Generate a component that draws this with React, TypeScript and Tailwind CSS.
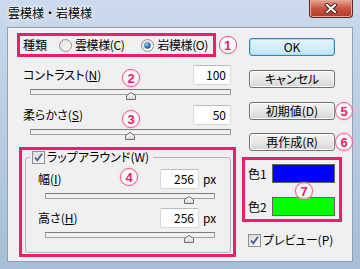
import type { ReactNode } from "react";

const jp = "font-['Noto_Sans_CJK_JP','Noto_Sans',sans-serif] [font-feature-settings:'palt'] whitespace-nowrap";

function Badge({ n, className }: { n: string; className: string }) {
  return (
    <span
      className={`absolute flex h-[18px] w-[18px] items-center justify-center rounded-full border-[1.5px] border-[#f2568a] bg-white/70 font-['Liberation_Sans',sans-serif] text-[13px] leading-none font-bold text-[#ec1b6c] shadow-[0_0_2px_#f9a8c6] ${className}`}
    >
      {n}
    </span>
  );
}

function Radio({ checked }: { checked?: boolean }) {
  return (
    <svg width="13" height="13" viewBox="0 0 13 13" className="block shrink-0">
      <defs>
        <linearGradient id="rg" x1="0" y1="0" x2="1" y2="1">
          <stop offset="0" stopColor="#dcdcdc" />
          <stop offset="1" stopColor="#ffffff" />
        </linearGradient>
        <radialGradient id="rd" cx="0.4" cy="0.35" r="0.7">
          <stop offset="0" stopColor="#9cd2f8" />
          <stop offset="0.6" stopColor="#2a6fc0" />
          <stop offset="1" stopColor="#1c4f95" />
        </radialGradient>
      </defs>
      <circle cx="6.5" cy="6.5" r="6" fill="url(#rg)" stroke="#8e8f8f" />
      {checked && <circle cx="6.5" cy="6.5" r="3.2" fill="url(#rd)" />}
    </svg>
  );
}

function Check() {
  return (
    <svg width="13" height="13" viewBox="0 0 13 13" className="block shrink-0">
      <defs>
        <linearGradient id="cg" x1="0" y1="0" x2="1" y2="1">
          <stop offset="0" stopColor="#d9d9d9" />
          <stop offset="1" stopColor="#fafafa" />
        </linearGradient>
      </defs>
      <rect x="0.5" y="0.5" width="12" height="12" fill="url(#cg)" stroke="#8e8f8f" />
      <path d="M3 6.5 L5.3 9.3 L10 2.8" fill="none" stroke="#4a5c98" strokeWidth="1.8" />
    </svg>
  );
}

function Thumb({ className }: { className: string }) {
  return (
    <svg width="10" height="8" viewBox="0 0 10 8" className={`absolute ${className}`}>
      <defs>
        <linearGradient id="tg" x1="0" y1="0" x2="0" y2="1">
          <stop offset="0" stopColor="#ffffff" />
          <stop offset="1" stopColor="#d6d6d6" />
        </linearGradient>
      </defs>
      <path d="M0.5 7.5 V3.5 L5 0.5 L9.5 3.5 V7.5 Z" fill="url(#tg)" stroke="#6f6f6f" />
    </svg>
  );
}

function Track({ className, thumb }: { className: string; thumb: string }) {
  return (
    <div className={`relative h-[6px] border border-[#a0a0a0] border-t-[#7c7c7c] bg-[#f2f2f2] ${className}`}>
      <Thumb className={thumb} />
    </div>
  );
}

function Field({ value, className }: { value: string; className: string }) {
  return (
    <div
      className={`flex h-[20px] items-center justify-end rounded-[2px] border border-[#d6d9de] border-t-[#b9bcc2] bg-white pr-[4px] text-[12px] ${className}`}
    >
      {value}
    </div>
  );
}

function Btn({ children, primary }: { children: ReactNode; primary?: boolean }) {
  return (
    <div
      className={
        primary
          ? "flex h-[18px] w-[86px] items-center justify-center rounded-[3px] border border-[#3c7fb1] bg-linear-to-b from-[#eaf6fd] to-[#bfe4f9] text-[12px] shadow-[inset_0_0_0_1px_#9ee3fc]"
          : "flex h-[18px] w-[86px] items-center justify-center rounded-[3px] border border-[#707070] bg-linear-to-b from-[#f3f3f3] via-[#e8e8e8] to-[#d4d4d4] text-[12px] shadow-[inset_0_0_0_1px_#fcfcfc]"
      }
    >
      {children}
    </div>
  );
}

export default function App() {
  return (
    <div className={`h-[269px] w-[360px] overflow-hidden bg-linear-to-b from-[#cbdaec] to-[#a7bdd6] ${jp} text-black`}>
      <div className="flex h-[27px] items-start justify-between pr-[7px]">
        <div className="pt-[5px] pl-[8px] text-[12px] leading-[16px] [font-feature-settings:normal] [text-shadow:0_0_6px_#fff,0_0_3px_#fff]">
          雲模様・岩模様
        </div>
        <div className="flex h-[18px] w-[44px] items-center justify-center rounded-b-[4px] border border-t-0 border-[#5c2a26] bg-linear-to-b from-[#e5a494] via-[#c75442] to-[#b23a28] shadow-[inset_0_0_0_1px_#e9a595]">
          <svg width="14" height="11" viewBox="0 0 14 11">
            <path d="M3 2 L11 9 M11 2 L3 9" stroke="#3a1f1c" strokeWidth="4" strokeLinecap="square" />
            <path d="M3 2 L11 9 M11 2 L3 9" stroke="#ffffff" strokeWidth="2.2" strokeLinecap="square" />
          </svg>
        </div>
      </div>

      <div className="mx-[7px] flex h-[235px] border border-[#8ea2b9] bg-[#f0f0f0]">
        <div className="ml-[9px] w-[219px] shrink-0">
          <div className="mt-[5px] flex items-center">
            <div className="flex h-[24px] w-[206px] items-center border-[3px] border-[#ec1f6e] pl-[3px] text-[12px]">
              <span>種類</span>
              <span className="ml-[12px]"><Radio /></span>
              <span className="ml-[3px] tracking-[-0.4px]">雲模様(C)</span>
              <span className="ml-[17px]"><Radio checked /></span>
              <span className="ml-[3px] tracking-[-0.4px]">岩模様(O)</span>
            </div>
            <div className="relative ml-[3px] h-[18px] w-[18px]">
              <Badge n="1" className="top-0 left-0" />
            </div>
          </div>

          <div className="relative mt-[8px] flex h-[20px] items-center justify-between pr-[5px] pl-[6px] text-[12px]">
            <span>コントラスト(<span className="underline">N</span>)</span>
            <Field value="100" className="w-[38px]" />
            <Badge n="2" className="top-[4px] left-[105px]" />
          </div>
          <Track className="mt-[4px] ml-[13px] w-[201px]" thumb="top-[2px] left-[95px]" />

          <div className="relative mt-[10px] flex h-[20px] items-center justify-between pr-[5px] pl-[6px] text-[12px]">
            <span>柔らかさ(<span className="underline">S</span>)</span>
            <Field value="50" className="w-[38px]" />
            <Badge n="3" className="top-[5px] left-[105px]" />
          </div>
          <Track className="mt-[4px] ml-[13px] w-[201px]" thumb="top-[2px] left-[94px]" />

          <div className="relative mt-[12px] ml-[2px] h-[110px] w-[217px] border-[3px] border-[#ec1f6e]">
            <fieldset className="ml-[3px] h-[103px] w-[206px] rounded-[3px] border border-[#b4b4b4] text-[12px]">
              <legend className="ml-[4px] h-[14px] w-[123px] bg-[#f0f0f0] px-[2px]">
                <span className="flex items-center gap-[2px] leading-[14px]">
                  <Check />
                  <span>ラップアラウンド(W)</span>
                </span>
              </legend>
              <div className="mt-[5px] flex items-center pl-[12px]">
                <span className="w-[122px]">幅(<span className="underline">I</span>)</span>
                <Field value="256" className="w-[39px]" />
                <span className="ml-[4px]">px</span>
              </div>
              <Track className="mt-[4px] ml-[19px] w-[170px]" thumb="top-[2px] left-[138px]" />
              <div className="mt-[9px] flex items-center pl-[12px]">
                <span className="w-[122px]">高さ(<span className="underline">H</span>)</span>
                <Field value="256" className="w-[39px]" />
                <span className="ml-[4px]">px</span>
              </div>
              <Track className="mt-[4px] ml-[19px] w-[170px]" thumb="top-[2px] left-[138px]" />
            </fieldset>
            <Badge n="4" className="top-[18px] left-[98px]" />
          </div>
        </div>

        <div className="ml-[6px] flex flex-col text-[12px]">
          <div className="mt-[10px] ml-[7px]">
            <Btn primary>OK</Btn>
          </div>
          <div className="mt-[14px] ml-[7px]">
            <Btn>キャンセル</Btn>
          </div>
          <div className="relative mt-[14px] ml-[7px]">
            <Btn>初期値(D)</Btn>
            <Badge n="5" className="top-0 left-[86px]" />
          </div>
          <div className="relative mt-[13px] ml-[7px]">
            <Btn>再作成(R)</Btn>
            <Badge n="6" className="top-0 left-[86px]" />
          </div>

          <div className="relative mt-[6px] h-[65px] w-[100px] border-[3px] border-[#ec1f6e] pt-[4px] pr-[4px] pl-[3px]">
            <div className="flex items-center justify-between">
              <span>色1</span>
              <div className="h-[19px] w-[63px] border border-[#646464] bg-[#0000ff]" />
            </div>
            <div className="mt-[14px] flex items-center justify-between">
              <span>色2</span>
              <div className="h-[19px] w-[63px] border border-[#646464] bg-[#00ff00]" />
            </div>
            <Badge n="7" className="top-[22px] left-[50px]" />
          </div>

          <div className="mt-[9px] ml-[6px] flex items-center gap-[2px]">
            <Check />
            <span>プレビュー(P)</span>
          </div>
        </div>
      </div>
    </div>
  );
}
